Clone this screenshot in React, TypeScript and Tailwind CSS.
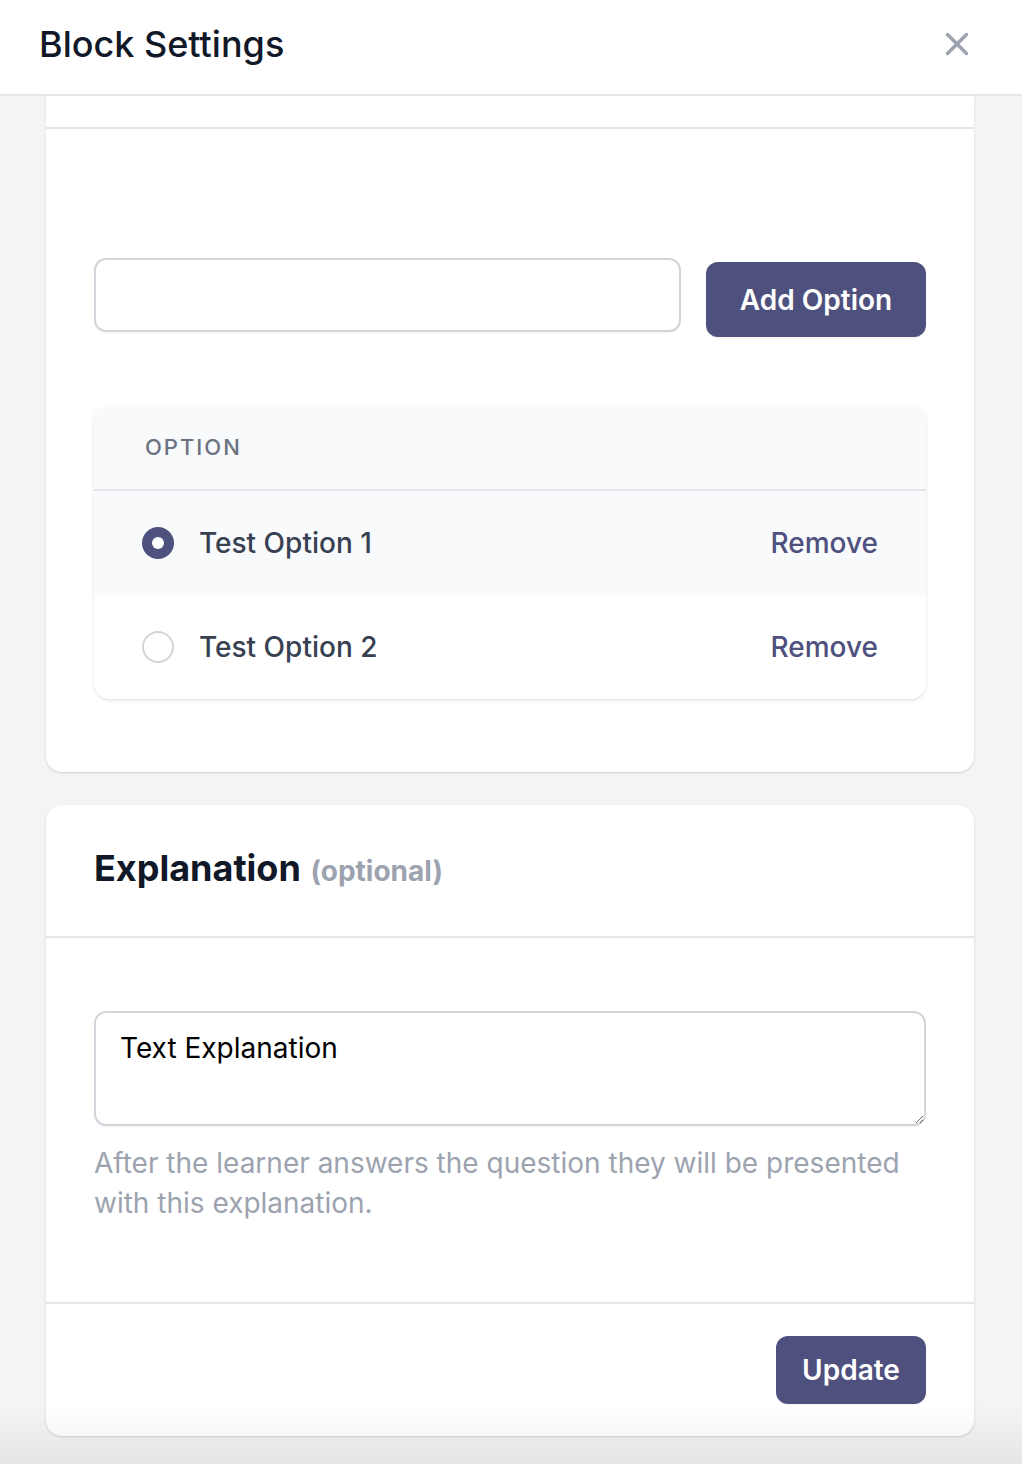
import { X } from "lucide-react";

const options = [
  { id: 1, label: "Test Option 1", selected: true },
  { id: 2, label: "Test Option 2", selected: false },
];

const App = () => {
  return (
    <div className="relative h-[1464px] overflow-hidden bg-[#f3f4f6] font-['Inter',sans-serif]">
      {/* Header */}
      <div className="flex h-[96px] items-center justify-between border-b-2 border-[#e5e7eb] bg-white pb-[6px] pl-[39px] pr-[46px]">
        <h1 className="text-[36px] font-medium leading-none text-[#111827]">Block Settings</h1>
        <button className="text-[#9ca3af]">
          <X size={38} strokeWidth={2.2} />
        </button>
      </div>

      <div className="pl-[46px] pr-[48px]">
        {/* Options card */}
        <div className="rounded-b-[16px] bg-white shadow-[0_1px_3px_rgba(0,0,0,0.1),0_1px_2px_rgba(0,0,0,0.06)]">
          <div className="h-[33px] border-b-2 border-[#e5e7eb]" />
          <div className="px-[48px] pb-[73px] pt-[129px]">
            <div className="flex items-start gap-[25px]">
              <input
                type="text"
                className="h-[74px] w-[587px] rounded-[12px] border-2 border-[#d1d5db] bg-white px-[24px] text-[28px] shadow-[0_1px_2px_rgba(0,0,0,0.05)] outline-none"
              />
              <button className="mt-[4px] h-[75px] flex-1 rounded-[12px] bg-[#4e507e] text-[28px] font-semibold text-white shadow-[0_1px_2px_rgba(0,0,0,0.05)]">
                Add Option
              </button>
            </div>

            <div className="mt-[68px] overflow-hidden rounded-[16px] bg-white shadow-[0_2px_4px_rgba(0,0,0,0.08),0_1px_2px_rgba(0,0,0,0.06)]">
              <div className="flex h-[86px] items-center border-b-2 border-[#e5e7eb] bg-[#f9fafb] px-[51px]">
                <span className="text-[22px] font-medium uppercase tracking-[2px] text-[#6b7280]">Option</span>
              </div>
              {options.map((o) => (
                <div
                  key={o.id}
                  className={`flex h-[104px] items-center justify-between pl-[48px] pr-[48px] ${o.selected ? "bg-[#f9fafb]" : "bg-white"}`}
                >
                  <div className="flex items-center gap-[25px]">
                    {o.selected ? (
                      <span className="flex h-[32px] w-[32px] items-center justify-center rounded-full bg-[#4e507e]">
                        <span className="h-[12px] w-[12px] rounded-full bg-white" />
                      </span>
                    ) : (
                      <span className="h-[32px] w-[32px] rounded-full border-2 border-[#d1d5db] bg-white" />
                    )}
                    <span className="text-[28px] font-medium text-[#374151]">{o.label}</span>
                  </div>
                  <button className="text-[28px] font-medium text-[#4e507e]">Remove</button>
                </div>
              ))}
            </div>
          </div>
        </div>

        {/* Explanation card */}
        <div className="mt-[33px] overflow-hidden rounded-[16px] bg-white shadow-[0_1px_3px_rgba(0,0,0,0.1),0_1px_2px_rgba(0,0,0,0.06)]">
          <div className="flex h-[133px] items-center border-b-2 border-[#e5e7eb] px-[48px] pb-[6px]">
            <h2 className="text-[36px] font-bold text-[#111827]">
              Explanation <span className="ml-[1px] text-[28px] font-bold text-[#9ca3af]">(optional)</span>
            </h2>
          </div>
          <div className="px-[48px] pb-[79px] pt-[73px]">
            <textarea
              defaultValue="Text Explanation"
              className="block h-[115px] w-full resize-y rounded-[12px] border-2 border-[#d1d5db] px-[24px] pb-[18px] pt-[15px] text-[28px] leading-[40px] text-black shadow-[0_1px_2px_rgba(0,0,0,0.05)] outline-none"
            />
            <p className="mt-[17px] text-[28px] leading-[40px] text-[#9ca3af]">
              After the learner answers the question they will be presented with this explanation.
            </p>
          </div>
          <div className="flex justify-end border-t-2 border-[#e5e7eb] px-[48px] py-[32px]">
            <button className="h-[68px] w-[150px] rounded-[12px] bg-[#4e507e] text-[28px] font-semibold text-white shadow-[0_1px_2px_rgba(0,0,0,0.05)]">
              Update
            </button>
          </div>
        </div>
      </div>

      {/* bottom fade */}
      <div className="pointer-events-none absolute inset-x-0 bottom-0 h-[60px] bg-linear-to-t from-black/[0.06] to-transparent" />
    </div>
  );
};

export default App;
